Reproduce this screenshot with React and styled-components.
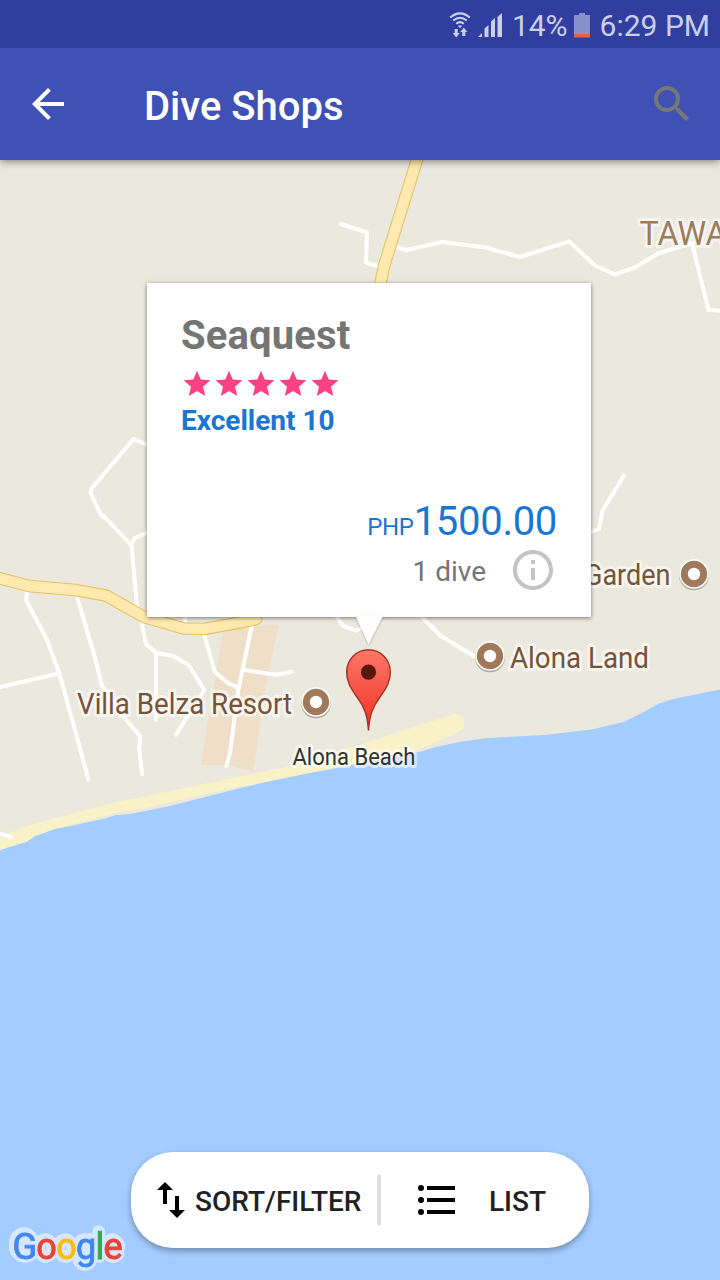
import React from "react";
import styled, { createGlobalStyle } from "styled-components";

const Global = createGlobalStyle`
  * { box-sizing: border-box; }
  body { margin: 0; font-family: Roboto, "Liberation Sans", sans-serif; }
  svg { display: block; flex: none; }
`;

const Screen = styled.div`
  width: 720px;
  height: 1280px;
  display: flex;
  flex-direction: column;
  overflow: hidden;
`;

const StatusBar = styled.header`
  height: 48px;
  flex: none;
  position: relative;
  z-index: 2;
  display: flex;
  align-items: center;
  justify-content: flex-end;
  padding: 2px 10px 0 0;
  background: #303f9f;
  color: #cbcfe9;
`;

const StatusText = styled.span`
  padding-top: 2px;
  font-size: 30px;
  line-height: 44px;
  white-space: nowrap;
`;

const StatusIcons = styled.div`
  display: flex;
  gap: 7px;
  margin-right: 9px;
`;

const Battery = styled.div`
  margin: 0 10px 0 6px;
`;

const AppBar = styled.nav`
  height: 112px;
  flex: none;
  display: flex;
  align-items: center;
  padding: 0 24px;
  background: #3f51b5;
  color: #fff;
  position: relative;
  z-index: 1;
  box-shadow: 0 2px 7px rgba(0, 0, 0, 0.42);
`;

const IconButton = styled.button`
  width: 48px;
  height: 48px;
  padding: 0;
  border: 0;
  background: none;
  color: ${(p) => p.$color};
`;

const Title = styled.h1`
  flex: 1;
  margin: 6px 0 0 72px;
  font-size: 40px;
  font-weight: 500;
  line-height: 48px;
`;

const MapArea = styled.main`
  flex: 1;
  position: relative;
  background: #ebe8de;
`;

const InfoCard = styled.section`
  position: absolute;
  left: 147px;
  top: 123px;
  width: 444px;
  height: 334px;
  padding: 29px 34px 23px;
  display: flex;
  flex-direction: column;
  align-items: flex-start;
  background: #fff;
  box-shadow: 0 1px 4px rgba(0, 0, 0, 0.5);
`;

const Pointer = styled.svg`
  position: absolute;
  left: 204px;
  top: 333px;
  filter: drop-shadow(0 1px 1px rgba(0, 0, 0, 0.25));
`;

const ShopName = styled.h2`
  margin: 0;
  font-size: 40px;
  font-weight: 700;
  line-height: 48px;
  letter-spacing: 0.15px;
  color: #757575;
`;

const Stars = styled.div`
  display: flex;
  height: 32px;
  margin-top: 8px;
  color: #ff4081;
`;

const Rating = styled.div`
  margin-top: 4px;
  font-size: 28px;
  font-weight: 700;
  line-height: 33px;
  color: #1976d2;
`;

const Price = styled.div`
  margin: auto 0 -5px 0;
  align-self: flex-end;
  font-size: 40px;
  line-height: 48px;
  letter-spacing: -0.3px;
  color: #1976d2;
`;

const Currency = styled.span`
  font-size: 24px;
`;

const Details = styled.div`
  align-self: flex-end;
  display: flex;
  align-items: center;
  gap: 23px;
  height: 48px;
  font-size: 28px;
  color: #757575;
`;

const DiveCount = styled.span`
  line-height: 32px;
  padding-top: 3px;
`;

const ActionPill = styled.div`
  position: absolute;
  left: 131px;
  top: 992px;
  width: 458px;
  height: 96px;
  display: flex;
  align-items: center;
  border-radius: 42px;
  background: #fff;
  box-shadow: 0 3px 6px rgba(0, 0, 0, 0.32);
`;

const Action = styled.button`
  display: flex;
  align-items: center;
  gap: ${(p) => p.$gap}px;
  padding: 0 0 0 ${(p) => p.$inset}px;
  width: ${(p) => p.$width}px;
  border: 0;
  background: none;
  color: #212121;
  font: 500 28px/34px Roboto, "Liberation Sans", sans-serif;
  white-space: nowrap;
`;

const ActionLabel = styled.span`
  padding-top: 3px;
`;

const Divider = styled.div`
  width: 4px;
  height: 50px;
  flex: none;
  background: #dedede;
`;

const Logo = styled.div`
  position: absolute;
  left: 12.5px;
  top: 1064.5px;
  display: flex;
  font-size: 36px;
  line-height: 44px;
  letter-spacing: -0.7px;
  -webkit-text-stroke: 0.9px currentColor;
  filter: drop-shadow(1.2px 1.2px 0 #d6e7ff) drop-shadow(-1.2px -1.2px 0 #d6e7ff)
    drop-shadow(1.2px -1.2px 0 #d6e7ff) drop-shadow(-1.2px 1.2px 0 #d6e7ff)
    drop-shadow(1px 0 0 #d6e7ff) drop-shadow(-1px 0 0 #d6e7ff)
    drop-shadow(0 1px 0 #d6e7ff) drop-shadow(0 -1px 0 #d6e7ff);
`;

const Letter = styled.span`
  color: ${(p) => p.$color};
`;

const minorRoads = [
  "341,224 367,232.5 366,262.5 378,266",
  "396,247 407,250 442,242 486,247.5 520,257 569,241.3 595,265.5 615,274.5 635,267.5 658,253.5 692,243 708.5,310 722,311",
  "591,532 599,529 602.5,510.5 624,475.5",
  "421,616 441,636 477,658",
  "150,446 133.5,439 92,488 90.5,493 101,515 106,518.5 131,545 135,538 150,531.5",
  "131.5,545 137,606",
  "27,592 26,600 46.7,639.3 59.3,673.3 75,730 88.5,779.5",
  "0,687 59,673.5",
  "77,597 95.7,660 101.7,685 123,716 140,736 139.3,748 142,774",
  "141.7,623 146,644 156,652.7 156,720",
  "156,652.7 173.3,656 188.7,665 204.3,690 176,734.7",
  "204.3,635 215,672.3 228.3,683.3 238.3,687.7",
  "251.7,626 238.3,690 230,753 226.3,766",
  "244.3,670 276.7,674.7 292,671.7",
  "185,612 185,622",
  "336.7,617 342.7,625.7 356,630.7 362,628",
  "-2,833 11,837",
];

const majorRoads = [
  "-5,577 29,586 75,590 106,595.5 144,617 184,628.5 204,629 240,622.5 256,619",
  "418.5,155 384.3,265 379,290",
];

const coast =
  "0,850 26.7,841.7 35.7,836 55,829 71.7,825.7 106.7,818 115,815.3 130,814 166.7,806.7 216.7,794 256.7,784 300,775 420,751.7 436.7,746.7 460,741.7 485,738.3 546.7,734.7 593,729.3 623.3,722 643.3,712.3 658.3,703.7 673.3,699 720,689.5";

function Place({ x, y }) {
  return (
    <g>
      <circle cx={x} cy={y + 1.3} r="15" fill="#8d8a84" opacity="0.7" />
      <circle cx={x} cy={y} r="14.8" fill="#fff" />
      <circle cx={x} cy={y} r="13.2" fill="#a0785a" />
      <circle cx={x} cy={y} r="6.2" fill="#fff" />
    </g>
  );
}

const MapLabel = styled.text`
  font-family: Roboto, "Liberation Sans", sans-serif;
  font-size: ${(p) => p.$size}px;
  fill: ${(p) => p.$color};
  stroke: rgba(255, 255, 255, 0.6);
  stroke-width: 6px;
  stroke-linejoin: round;
  paint-order: stroke fill;
`;

function MapDrawing() {
  return (
    <svg width="720" height="1120" viewBox="0 160 720 1120">
      <defs>
        <linearGradient id="pin" x1="0" y1="0" x2="0" y2="1">
          <stop offset="0" stopColor="#fc776a" />
          <stop offset="0.75" stopColor="#f44232" />
          <stop offset="1" stopColor="#d8382a" />
        </linearGradient>
      </defs>
      <polygon points="224,628 278.7,624.3 265,690 255,760 252.3,771 228,765 201,765 213,690" fill="#f0dfc8" />
      <polygon
        points="0,837.7 10,833 30,825 113,802.7 300,764 455,713.7 461.7,715.7 464,718 464,728 456.7,733 413,752 300,780 240,786.5 150,807 113,814 60,828 30,845 0,856"
        fill="#f9f1c7"
      />
      <polygon points={`${coast} 720,1280 0,1280`} fill="#a3ccff" />
      <g fill="none" stroke="#fff" strokeWidth="4" strokeLinecap="round" strokeLinejoin="round">
        {minorRoads.map((d) => (
          <polyline key={d} points={d} />
        ))}
      </g>
      <g fill="none" strokeLinejoin="round" strokeLinecap="round">
        {majorRoads.map((d) => (
          <g key={d}>
            <polyline points={d} stroke="#e6c267" strokeWidth="12.6" />
            <polyline points={d} stroke="#ffe9ae" strokeWidth="10.4" />
          </g>
        ))}
      </g>
      <MapLabel x="639.5" y="245" $size={34} $color="#9c7d5b" textLength="87" lengthAdjust="spacingAndGlyphs">
        TAWA
      </MapLabel>
      <MapLabel x="584" y="585" $size={30} $color="#775339" textLength="86.500" lengthAdjust="spacingAndGlyphs">
        Garden
      </MapLabel>
      <MapLabel x="510" y="667.5" $size={30} $color="#775339" textLength="139" lengthAdjust="spacingAndGlyphs">
        Alona Land
      </MapLabel>
      <MapLabel x="77" y="713.5" $size={30} $color="#775339" textLength="215" lengthAdjust="spacingAndGlyphs">
        Villa Belza Resort
      </MapLabel>
      <MapLabel x="292.5" y="764.5" $size={24} $color="#33322c" textLength="123" lengthAdjust="spacingAndGlyphs">
        Alona Beach
      </MapLabel>
      <Place x={694} y={574} />
      <Place x={490} y={656} />
      <Place x={316} y={702} />
      <path
        d="M368.5 730.5C367.5 715 364.5 707 357 697C350 687.500 346.700 681 346.700 672A21.800 22.300 0 0 1 390.300 672C390.300 681 387 687.500 380 697C372.500 707 369.500 715 368.500 730.500Z"
        fill="url(#pin)"
        stroke="#ab3226"
        strokeWidth="1.5"
      />
      <circle cx="368.5" cy="672.2" r="7.6" fill="#5a150f" />
    </svg>
  );
}

function Star() {
  return (
    <svg width="32" height="32" viewBox="0 0 24 24" fill="currentColor">
      <path d="M12 17.27 18.180 21l-1.640-7.030L22 9.240l-7.190-.61L12 2 9.190 8.630 2 9.240l5.460 4.730L5.820 21z" />
    </svg>
  );
}

export default function App() {
  return (
    <Screen>
      <Global />
      <StatusBar>
        <StatusIcons>
          <svg width="22" height="26" viewBox="0 0 22 26" fill="none" stroke="currentColor" strokeWidth="2">
            <path d="M1.200 5.500Q11-2.800 20.800 5.500M4.200 8.600Q11 3 17.800 8.600M7.200 11.700Q11 8.600 14.800 11.700" />
            <path d="M8.700 13.500h4.600L11 16.200z" fill="currentColor" stroke="none" />
            <path d="M5.700 17h3v4h2l-3.500 4.500L3.700 21h2zM13.300 24h3v-4h2L14.800 15.500 11.300 20h2z" fill="currentColor" stroke="none" />
          </svg>
          <svg width="25" height="26" viewBox="0 0 25 26" fill="currentColor">
            <path d="M0 25l4-4v4zM6.500 25v-8.500L10.500 13v12zM13 25V9.500L17 6v19zM19.500 25V5L24 1v24z" />
          </svg>
        </StatusIcons>
        <StatusText>14%</StatusText>
        <Battery>
          <svg width="16" height="25" viewBox="0 0 16 25">
            <path d="M0 2h5V0h6v2h5v19H0z" fill="#8990c8" />
            <path d="M0 21h16v3.500H0z" fill="#dc6450" />
          </svg>
        </Battery>
        <StatusText>6:29 PM</StatusText>
      </StatusBar>
      <AppBar>
        <IconButton $color="#fff" aria-label="Back">
          <svg width="48" height="48" viewBox="0 0 24 24" fill="currentColor">
            <path d="M20 11H7.830l5.590-5.590L12 4l-8 8 8 8 1.410-1.410L7.830 13H20v-2z" />
          </svg>
        </IconButton>
        <Title>Dive Shops</Title>
        <IconButton $color="#777775" aria-label="Search">
          <svg width="48" height="48" viewBox="0 0 24 24" fill="currentColor">
            <path d="M15.500 14h-.79l-.28-.27A6.471 6.471 0 0 0 16 9.500 6.500 6.500 0 1 0 9.500 16c1.610 0 3.090-.59 4.230-1.570l.27.28v.79l5 4.990L20.490 19l-4.990-5zm-6 0C7.010 14 5 11.990 5 9.500S7.010 5 9.500 5 14 7.010 14 9.500 11.990 14 9.500 14z" />
          </svg>
        </IconButton>
      </AppBar>
      <MapArea>
        <MapDrawing />
        <InfoCard>
          <ShopName>Seaquest</ShopName>
          <Stars>
            {[0, 1, 2, 3, 4].map((n) => (
              <Star key={n} />
            ))}
          </Stars>
          <Rating>Excellent 10</Rating>
          <Price>
            <Currency>PHP</Currency>1500.00
          </Price>
          <Details>
            <DiveCount>1 dive</DiveCount>
            <svg width="48" height="48" viewBox="0 0 24 24" fill="#c4c4c4">
              <path d="M11 17h2v-6h-2v6zm1-15C6.480 2 2 6.480 2 12s4.480 10 10 10 10-4.480 10-10S17.520 2 12 2zm0 18c-4.410 0-8-3.590-8-8s3.590-8 8-8 8 3.590 8 8-3.590 8-8 8zM11 9h2V7h-2v2z" />
            </svg>
          </Details>
          <Pointer width="36" height="32" viewBox="0 0 36 32">
            <path d="M4.500 0h27.500L17.500 28.500z" fill="#fff" />
          </Pointer>
        </InfoCard>
        <ActionPill>
          <Action $inset={26} $gap={10} $width={246}>
            <svg width="28" height="36" viewBox="0 0 28 36" fill="#000">
              <path d="M8 0l8 8h-6v14H6V8H0zM18 14h4v14h6l-8 8-8-8h6z" />
            </svg>
            <ActionLabel>SORT/FILTER</ActionLabel>
          </Action>
          <Divider />
          <Action $inset={37} $gap={34} $width={208}>
            <svg width="37" height="30" viewBox="0 0 37 30" fill="#000">
              <circle cx="3" cy="3" r="3" />
              <circle cx="3" cy="15" r="3" />
              <circle cx="3" cy="27" r="3" />
              <path d="M9 1h28v4H9zM9 13h28v4H9zM9 25h28v4H9z" />
            </svg>
            <ActionLabel>LIST</ActionLabel>
          </Action>
        </ActionPill>
        <Logo>
          <Letter $color="#4285f4">G</Letter>
          <Letter $color="#ea4335">o</Letter>
          <Letter $color="#fbbc05">o</Letter>
          <Letter $color="#4285f4">g</Letter>
          <Letter $color="#34a853">l</Letter>
          <Letter $color="#ea4335">e</Letter>
        </Logo>
      </MapArea>
    </Screen>
  );
}
